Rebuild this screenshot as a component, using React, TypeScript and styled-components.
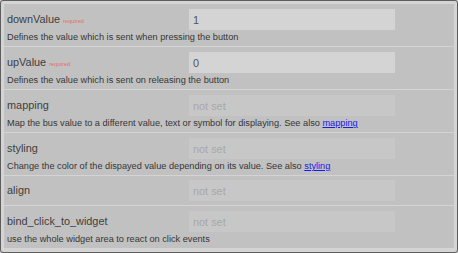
import React from "react";
import styled, { createGlobalStyle } from "styled-components";

const Global = createGlobalStyle`
  html, body { margin: 0; padding: 0; background: #c8c8c8; }
  body { font-family: "Liberation Sans", Arial, sans-serif; }
`;

const Frame = styled.div`
  width: 458px;
  height: 253px;
  box-sizing: border-box;
  border: 1px solid #5e5e5e;
  border-radius: 3px;
  background: #d4d4d4;
  padding: 3px;
  display: flex;
  flex-direction: column;
  gap: 1px;
`;

const Row = styled.div<{ $hasDesc: boolean }>`
  background: #c1c1c1;
  padding: ${(p) => (p.$hasDesc ? "5px 4px 1px 3px" : "4px 4px 4px 3px")};
  display: flex;
  flex-direction: column;
`;

const Top = styled.div`
  display: flex;
  align-items: center;
  height: 21px;
`;

const Label = styled.div`
  width: 182px;
  flex: none;
  font-size: 10.9px;
  color: #404040;
  display: flex;
  align-items: baseline;
  padding-bottom: 2px;
`;

const Required = styled.span`
  font-size: 5.7px;
  color: #e07070;
  margin-left: 3px;
`;

const Input = styled.div<{ $empty: boolean }>`
  width: 206px;
  height: 21px;
  box-sizing: border-box;
  padding-left: 4px;
  display: flex;
  align-items: center;
  background: ${(p) => (p.$empty ? "#c7c7c7" : "#d4d4d4")};
  color: ${(p) => (p.$empty ? "#a8a8a8" : "#555555")};
  font-size: 10.9px;
`;

const Desc = styled.div`
  font-size: 9.2px;
  line-height: 15px;
  color: #363636;
  a { color: #1a1aee; }
`;

type Item = {
  name: string;
  required?: boolean;
  value?: string;
  desc?: React.ReactNode;
};

const items: Item[] = [
  { name: "downValue", required: true, value: "1", desc: "Defines the value which is sent when pressing the button" },
  { name: "upValue", required: true, value: "0", desc: "Defines the value which is sent on releasing the button" },
  {
    name: "mapping",
    desc: (
      <>
        Map the bus value to a different value, text or symbol for displaying. See also <a href="#">mapping</a>
      </>
    ),
  },
  {
    name: "styling",
    desc: (
      <>
        Change the color of the dispayed value depending on its value. See also <a href="#">styling</a>
      </>
    ),
  },
  { name: "align" },
  { name: "bind_click_to_widget", desc: "use the whole widget area to react on click events" },
];

export default function App() {
  return (
    <>
      <Global />
      <Frame>
        {items.map((it) => (
          <Row key={it.name} $hasDesc={!!it.desc}>
            <Top>
              <Label>
                {it.name}
                {it.required && <Required>required</Required>}
              </Label>
              <Input $empty={!it.value}>{it.value ?? "not set"}</Input>
            </Top>
            {it.desc && <Desc>{it.desc}</Desc>}
          </Row>
        ))}
      </Frame>
    </>
  );
}
